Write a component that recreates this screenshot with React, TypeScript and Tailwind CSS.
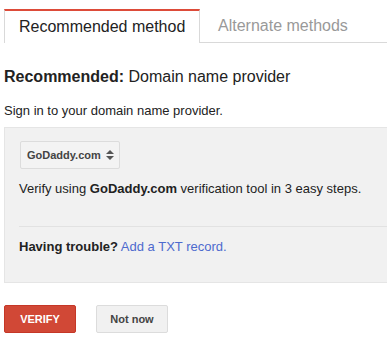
export default function App() {
  return (
    <div className="w-[387px] h-[352px] bg-white overflow-hidden text-[#222] font-['Liberation_Sans',Arial,sans-serif]">
      <div className="flex pt-[9px] pl-[4px]">
        <div className="w-[196px] h-[34px] border-t-2 border-t-[#dd4b39] border-l border-r border-[#d9d9d9] bg-white flex items-center pl-[14px] text-[16px] text-[#222]">
          Recommended method
        </div>
        <div className="flex-1 h-[34px] border-b border-[#d9d9d9] flex items-center pl-[18px] text-[16px] text-[#999]">
          Alternate methods
        </div>
      </div>
      <div className="pl-[4px]">
        <div className="mt-[24px] text-[16px] leading-[20px] text-[#222]">
          <span className="font-bold">Recommended:</span> Domain name provider
        </div>
        <div className="mt-[16px] text-[13px] leading-[16px] text-[#222]">Sign in to your domain name provider.</div>
        <div className="mt-[8px] bg-[#f1f1f1] border-t border-b border-l border-[#e5e5e5] pl-[15px] pt-[13px] h-[156px]">
          <div className="w-[100px] h-[28px] border border-[#dcdcdc] rounded-[2px] bg-[#f3f3f3] flex items-center pl-[6px] text-[11px] font-bold text-[#444]">
            GoDaddy.com
            <svg width="8" height="10" viewBox="0 0 8 10" className="ml-[5px]">
              <path d="M0 4 L4 0 L8 4 Z" fill="#555" />
              <path d="M0 6 L4 10 L8 6 Z" fill="#555" />
            </svg>
          </div>
          <div className="mt-[12px] text-[13px] leading-[16px] text-[#222] -ml-[1px]">
            Verify using <span className="font-bold">GoDaddy.com</span> verification tool in 3 easy steps.
          </div>
          <div className="mt-[29px] border-t border-[#e2e2e2] -ml-[1px]" />
          <div className="mt-[12px] text-[13px] leading-[16px] -ml-[1px]">
            <span className="font-bold text-[#222]">Having trouble?</span>{" "}
            <span className="text-[#4d6ace]">Add a TXT record.</span>
          </div>
        </div>
        <div className="flex gap-[20px] mt-[22px]">
          <div className="w-[72px] h-[28px] rounded-[2px] bg-[#d14836] border border-[#c53727] text-white text-[11px] font-bold flex items-center justify-center">
            VERIFY
          </div>
          <div className="w-[72px] h-[28px] rounded-[2px] bg-[#f1f1f1] border border-[#dcdcdc] text-[#444] text-[11px] font-bold flex items-center justify-center">
            Not now
          </div>
        </div>
      </div>
    </div>
  );
}
